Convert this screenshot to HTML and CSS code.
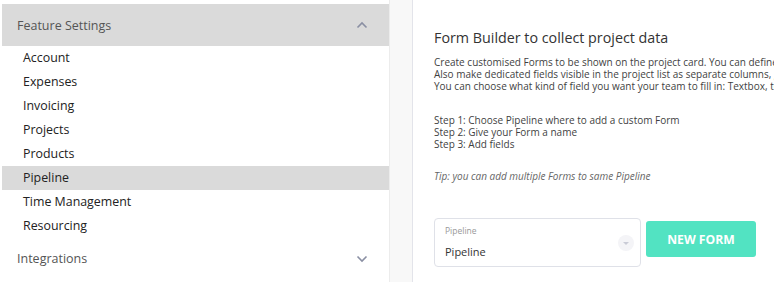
FILE: index.html
```html
<html>

<head>
  <title>Settings - Form Builder</title>
  <link rel="stylesheet" href="styles.css">
</head>

<body>
  <div class="page">
    <div class="sidebar">
      <div class="group-header open">
        <span>Feature Settings</span>
        <svg class="chevron" width="12" height="8" viewBox="0 0 12 8">
          <path d="M1.5 6.5 L6 2 L10.5 6.5" fill="none" stroke="#8a8fa3" stroke-width="1.6" />
        </svg>
      </div>
      <ul class="menu">
        <li>Account</li>
        <li>Expenses</li>
        <li>Invoicing</li>
        <li>Projects</li>
        <li>Products</li>
        <li class="active">Pipeline</li>
        <li>Time Management</li>
        <li>Resourcing</li>
      </ul>
      <div class="group-header">
        <span>Integrations</span>
        <svg class="chevron" width="12" height="8" viewBox="0 0 12 8">
          <path d="M1.5 1.5 L6 6 L10.5 1.5" fill="none" stroke="#8a8fa3" stroke-width="1.6" />
        </svg>
      </div>
    </div>
    <div class="gutter"></div>
    <div class="content">
      <h1 class="title">Form Builder to collect project data</h1>
      <p class="text">
        Create customised Forms to be shown on the project card. You can define the fields and their order.<br>
        Also make dedicated fields visible in the project list as separate columns, great for filtering.<br>
        You can choose what kind of field you want your team to fill in: Textbox, text area, dropdown.
      </p>
      <p class="text steps">
        Step 1: Choose Pipeline where to add a custom Form<br>
        Step 2: Give your Form a name<br>
        Step 3: Add fields
      </p>
      <p class="text tip">Tip: you can add multiple Forms to same Pipeline</p>
      <div class="form-row">
        <div class="select">
          <div class="select-label">Pipeline</div>
          <div class="select-value">Pipeline</div>
          <div class="select-arrow">
            <svg width="8" height="5" viewBox="0 0 8 5">
              <path d="M1 1 L4 4 L7 1 Z" fill="#c9cbd6" />
            </svg>
          </div>
        </div>
        <button class="btn-new">NEW FORM</button>
      </div>
    </div>
  </div>
</body>

</html>
```

FILE: styles.css
```css
body {
  margin: 0;
  font-family: 'Open Sans', sans-serif;
  background: #fff;
}

.page {
  display: flex;
  height: 282px;
  overflow: hidden;
}

.sidebar {
  width: 387px;
  padding: 4px 0 0 2px;
  border-right: 1px solid #ececec;
}

.group-header {
  display: flex;
  align-items: center;
  justify-content: space-between;
  height: 42px;
  padding: 0 21px 0 15px;
  font-size: 12.5px;
  color: #555;
}

.group-header.open {
  background: #dadada;
}

.group-header:last-child {
  margin-top: 2px;
  height: 37px;
}

.menu {
  list-style: none;
  margin: 0;
  padding: 0;
}

.menu li {
  height: 24px;
  line-height: 24px;
  padding-left: 21px;
  font-size: 12.4px;
  color: #222;
}

.menu li.active {
  background: #dadada;
}

.gutter {
  width: 22px;
  background: #f8f8f8;
  border-right: 1px solid #e3e4ea;
}

.content {
  flex: 1;
  padding: 28px 0 0 21px;
  white-space: nowrap;
  overflow: hidden;
}

.title {
  margin: 0 0 9px;
  font-size: 14.3px;
  font-weight: 400;
  color: #333;
}

.text {
  margin: 0 0 22px;
  font-size: 10px;
  line-height: 12px;
  color: #3f3f3f;
}

.steps {
  margin-bottom: 20px;
}

.tip {
  font-style: italic;
  color: #666;
  margin-bottom: 36px;
}

.form-row {
  display: flex;
  align-items: flex-start;
  gap: 5px;
}

.select {
  position: relative;
  width: 207px;
  height: 49px;
  border: 1px solid #dfe1e8;
  border-radius: 4px;
  box-sizing: border-box;
  padding: 6px 0 0 10px;
}

.select-label {
  font-size: 8.5px;
  color: #999;
  line-height: 12px;
}

.select-value {
  margin-top: 7px;
  font-size: 11px;
  line-height: 16px;
  color: #333;
}

.select-arrow {
  position: absolute;
  right: 6px;
  top: 16px;
  width: 16px;
  height: 16px;
  border-radius: 50%;
  background: #f4f4f7;
  display: flex;
  align-items: center;
  justify-content: center;
}

.btn-new {
  margin-top: 3px;
  width: 110px;
  height: 36px;
  border: none;
  border-radius: 3px;
  background: #52e3c2;
  color: #fff;
  font-family: 'Open Sans', sans-serif;
  font-size: 12.2px;
  font-weight: 700;
}
```
